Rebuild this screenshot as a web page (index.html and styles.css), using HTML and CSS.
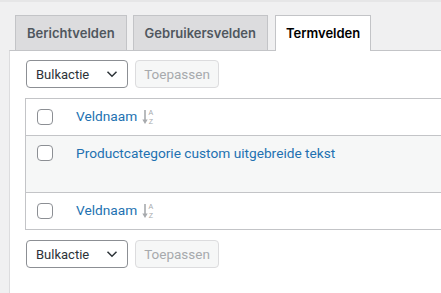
FILE: index.html
```html
<!DOCTYPE html>
<html>

<head>
    <title>Termvelden</title>
    <meta name="viewport" content="width=device-width, initial-scale=1.0">
    <link rel="stylesheet" href="styles.css">
</head>

<body>
    <div class="topline"></div>

    <div class="page">
        <nav class="tabs">
            <a class="tab">Berichtvelden</a>
            <a class="tab">Gebruikersvelden</a>
            <a class="tab active">Termvelden</a>
        </nav>

        <div class="panel">
            <div class="tablenav">
                <div class="select">Bulkactie
                    <svg width="12" height="8" viewBox="0 0 12 8"><path d="M1.5 1.8 6 6.2l4.5-4.4" fill="none" stroke="#2c3338" stroke-width="1.5"/></svg>
                </div>
                <button class="apply" disabled>Toepassen</button>
            </div>

            <table class="list">
                <thead>
                    <tr>
                        <td class="check"><span class="box"></span></td>
                        <td><a class="sort">Veldnaam</a>
                            <svg class="sort-icon" width="13" height="18" viewBox="0 0 13 18">
                                <path d="M3 2v11.5" stroke="#a7aaad" stroke-width="1.6"/>
                                <path d="M0.3 11.5 3 16l2.7-4.5z" fill="#a7aaad"/>
                                <text x="6.5" y="7" font-size="7" fill="#a7aaad" font-family="Liberation Sans, sans-serif">A</text>
                                <text x="6.7" y="16" font-size="7" fill="#a7aaad" font-family="Liberation Sans, sans-serif">Z</text>
                            </svg>
                        </td>
                    </tr>
                </thead>
                <tbody>
                    <tr class="alt">
                        <td class="check"><span class="box"></span></td>
                        <td><a class="name">Productcategorie custom uitgebreide tekst</a></td>
                    </tr>
                </tbody>
                <tfoot>
                    <tr>
                        <td class="check"><span class="box"></span></td>
                        <td><a class="sort">Veldnaam</a>
                            <svg class="sort-icon" width="13" height="18" viewBox="0 0 13 18">
                                <path d="M3 2v11.5" stroke="#a7aaad" stroke-width="1.6"/>
                                <path d="M0.3 11.5 3 16l2.7-4.5z" fill="#a7aaad"/>
                                <text x="6.5" y="7" font-size="7" fill="#a7aaad" font-family="Liberation Sans, sans-serif">A</text>
                                <text x="6.7" y="16" font-size="7" fill="#a7aaad" font-family="Liberation Sans, sans-serif">Z</text>
                            </svg>
                        </td>
                    </tr>
                </tfoot>
            </table>

            <div class="tablenav">
                <div class="select">Bulkactie
                    <svg width="12" height="8" viewBox="0 0 12 8"><path d="M1.5 1.8 6 6.2l4.5-4.4" fill="none" stroke="#2c3338" stroke-width="1.5"/></svg>
                </div>
                <button class="apply" disabled>Toepassen</button>
            </div>
        </div>
    </div>
</body>

</html>
```

FILE: styles.css
```css
body {
    margin: 0;
    background-color: #f0f0f1;
    font-family: Inter, "Noto Sans", sans-serif;
    color: #1d2327;
    overflow: hidden;
}

.topline {
    height: 2px;
    background-color: #e6e6e7;
}

.page {
    padding-left: 9px;
}

.tabs {
    display: flex;
    gap: 6px;
    padding: 13px 0 0 6px;
}

.tab {
    display: block;
    height: 34px;
    line-height: 35px;
    padding: 0 11px;
    border: 1px solid #c3c4c7;
    border-bottom: none;
    background-color: #dcdcde;
    color: #50575e;
    font-size: 13px;
    font-weight: 600;
}

.tab.active {
    background-color: #fff;
    color: #000;
    height: 35px;
    margin-bottom: -1px;
    margin-left: 1px;
    padding: 0 10px;
    position: relative;
}

.panel {
    background-color: #fff;
    border-left: 1px solid #dcdcde;
    border-top: 1px solid #c3c4c7;
    padding: 9px 0 28px 15px;
    min-height: 240px;
}

.tablenav {
    display: flex;
    gap: 7px;
    padding-left: 1px;
}

.select {
    box-sizing: border-box;
    width: 102px;
    height: 28px;
    border: 1px solid #8c8f94;
    border-radius: 4px;
    padding: 0 9px;
    display: flex;
    align-items: center;
    justify-content: space-between;
    font-family: Roboto, sans-serif;
    font-size: 13px;
    color: #2c3338;
}

.apply {
    box-sizing: border-box;
    width: 84px;
    height: 28px;
    border: 1px solid #dcdcde;
    border-radius: 4px;
    background-color: #f6f7f7;
    color: #a7aaad;
    font-family: Roboto, sans-serif;
    font-size: 13.5px;
    padding: 0;
}

.list {
    width: 420px;
    border-collapse: collapse;
    border: 1px solid #c3c4c7;
    margin: 10px 0;
}

.list td {
    padding: 0;
    vertical-align: top;
    font-family: Roboto, sans-serif;
    font-size: 13.7px;
}

.list thead td,
.list tfoot td {
    height: 36px;
    vertical-align: middle;
}

.list thead tr {
    border-bottom: 1px solid #c3c4c7;
}

.list tfoot tr {
    border-top: 1px solid #c3c4c7;
}

.alt {
    background-color: #f6f7f7;
    height: 57px;
}

.alt td {
    padding-top: 9px;
}

.check {
    width: 39px;
    padding-left: 11px !important;
}

.box {
    display: block;
    box-sizing: border-box;
    width: 16px;
    height: 16px;
    border: 1px solid #8c8f94;
    border-radius: 4px;
    background: #fff;
}

.sort,
.name {
    color: #2271b1;
}

.sort-icon {
    vertical-align: middle;
    margin-left: 1px;
}
```
